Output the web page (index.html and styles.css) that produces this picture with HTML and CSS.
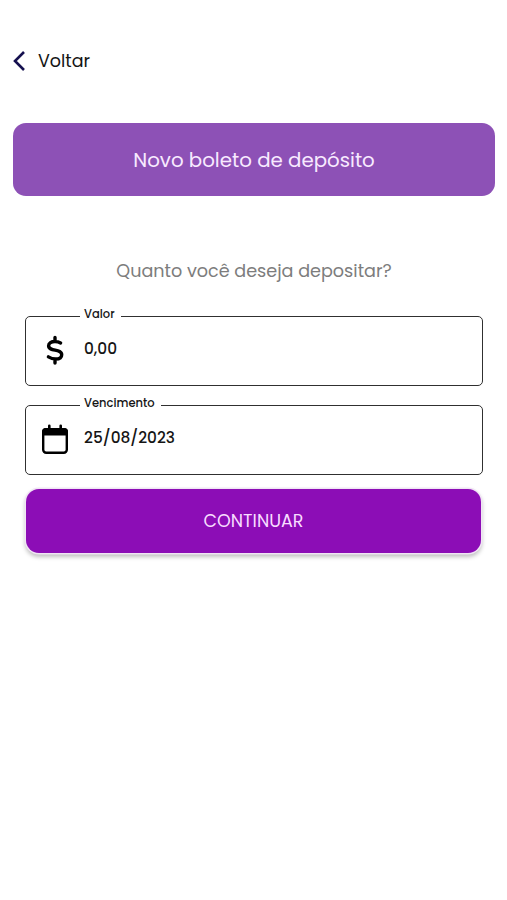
FILE: index.html
```html
<!DOCTYPE html>
<html lang="pt-BR">
<head>
<meta charset="utf-8">
<meta name="viewport" content="width=device-width, initial-scale=1">
<title>Novo boleto de depósito</title>
<link rel="stylesheet" href="styles.css">
</head>
<body>
<header class="topbar">
  <svg class="back-icon" width="14" height="22" viewBox="0 0 14 22"><path d="M13 2 4 11l9 9"/></svg>
  <span class="back-label">Voltar</span>
</header>
<main>
  <h1 class="banner">Novo boleto de depósito</h1>
  <form class="form">
    <p class="question">Quanto você deseja depositar?</p>
    <fieldset class="field">
      <legend>Valor</legend>
      <div class="row">
        <svg class="icon" width="30" height="32" viewBox="0 0 30 32"><path class="dollar" d="M15 3.500v4M15 25v4M20.600 8.900C19 8 17 7.500 15 7.500c-3.800 0-6.400 1.600-6.400 4.200 0 6.400 13.100 2.600 13.100 9 0 2.800-2.600 4.300-6.100 4.300-2.700 0-5.200-.9-7.200-2.100"/></svg>
        <span class="value">0,00</span>
      </div>
    </fieldset>
    <fieldset class="field">
      <legend>Vencimento</legend>
      <div class="row">
        <svg class="icon" width="30" height="32" viewBox="0 0 30 32"><rect class="cal" x="3.200" y="6.200" width="23.600" height="23.600" rx="3"/><path d="M2 12.500V8.500q0-3.500 3.500-3.500h19q3.500 0 3.500 3.500v4z"/><path class="rings" d="M9.300 2.800v4M20.700 2.800v4"/></svg>
        <span class="value">25/08/2023</span>
      </div>
    </fieldset>
    <button class="submit" type="button">CONTINUAR</button>
  </form>
</main>
</body>
</html>
```
FILE: styles.css
```css
* { box-sizing: border-box; }
body {
  margin: 0;
  min-height: 900px;
  background: #fff;
  color: #151515;
  font-family: Poppins, Inter, "Liberation Sans", sans-serif;
}
.topbar {
  display: flex;
  align-items: center;
  height: 122px;
  padding-left: 11px;
}
.back-icon { margin-right: 13px; overflow: visible; fill: none; stroke: #15104f; stroke-width: 2.6; }
.back-label { font-size: 17.500px; }
.banner {
  display: flex;
  align-items: center;
  justify-content: center;
  height: 73px;
  margin: 1px 12px 0 13px;
  border-radius: 13px;
  background: #8d51b6;
  color: #f8eaff;
  font-size: 19.800px;
  font-weight: 400;
}
.form { padding: 62px 24px 0 25px; }
.question {
  margin: 0 0 25px;
  text-align: center;
  color: #7d7d7d;
  font-size: 17.600px;
  line-height: 26px;
}
.field {
  height: 77px;
  margin: 0 0 12px;
  padding: 0;
  border: 1.500px solid #303030;
  border-radius: 5px;
}
legend {
  height: 14px;
  margin-left: 54px;
  padding: 0 6px 0 4px;
  font-size: 11.500px;
  font-weight: 500;
  line-height: 10px;
}
.row { display: flex; align-items: center; height: 42px; padding: 0 14px; }
.icon { margin-top: 12px; margin-right: 14px; }
.dollar { fill: none; stroke: #000; stroke-width: 3.4; stroke-linecap: round; }
.cal { fill: none; stroke: #000; stroke-width: 2.4; }
.rings { stroke: #000; stroke-width: 2.6; stroke-linecap: round; }
.value { margin-top: 9px; font-size: 15.400px; font-weight: 500; }
.submit {
  display: block;
  width: 455px;
  height: 64px;
  margin: 14px 0 0 1px;
  padding: 0;
  border: 0;
  border-radius: 13px;
  background: #8c0db6;
  box-shadow: 0 0 0 1.500px #f0e5f4, 0 3px 4px 1px rgba(0, 0, 0, .25);
  color: #f8dcff;
  font-family: inherit;
  font-size: 17.500px;
}
```
